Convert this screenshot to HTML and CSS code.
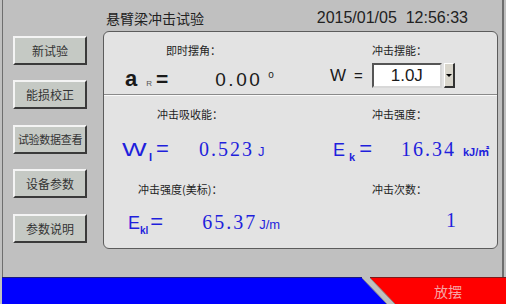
FILE: index.html
```html
<!DOCTYPE html>
<html lang="zh-CN">
<head>
    <meta charset="UTF-8">
    <title>悬臂梁冲击试验</title>
    <link rel="stylesheet" href="styles.css">
</head>
<body>
<div class="screen">
    <div class="main">
        <div class="header">
            <span class="title">悬臂梁冲击试验</span>
            <span class="clock">2015/01/05&nbsp;&nbsp;12:56:33</span>
        </div>

        <div class="sidebar">
            <button class="btn">新试验</button>
            <button class="btn">能损校正</button>
            <button class="btn btn-long">试验数据查看</button>
            <button class="btn">设备参数</button>
            <button class="btn">参数说明</button>
        </div>

        <div class="panel">
            <!-- 第一行：摆角 / 摆能 -->
            <div class="cell angle-cell">
                <div class="label">即时摆角：</div>
                <div class="value">
                    <span class="sym-a">a</span><span class="sub-r">R</span><span class="eq-black">=</span><span class="angle">0.00</span><span class="deg">o</span>
                </div>
            </div>
            <div class="cell energy-cell">
                <div class="label">冲击摆能：</div>
                <div class="value">
                    <span class="sym-w">W</span><span class="eq-small">=</span><span class="select"><span class="select-text">1.0J</span><span class="select-btn"></span></span>
                </div>
            </div>

            <div class="divider"></div>

            <!-- 第二行：吸收能 / 冲击强度 -->
            <div class="cell absorb-cell">
                <div class="label">冲击吸收能：</div>
                <div class="value blue">
                    <span class="big-w">W</span><span class="sub">I</span><span class="eq">=</span><span class="num num-absorb">0.523</span><span class="unit">J</span>
                </div>
            </div>
            <div class="cell strength-cell">
                <div class="label">冲击强度：</div>
                <div class="value blue">
                    <span class="big">E</span><span class="sub">k</span><span class="eq">=</span><span class="num num-strength">16.34</span><span class="unit unit-small">kJ/㎡</span>
                </div>
            </div>

            <!-- 第三行：美标强度 / 次数 -->
            <div class="cell us-cell">
                <div class="label">冲击强度(美标)：</div>
                <div class="value blue">
                    <span class="big">E</span><span class="sub">kl</span><span class="eq">=</span><span class="num num-us">65.37</span><span class="unit">J/m</span>
                </div>
            </div>
            <div class="cell count-cell">
                <div class="label">冲击次数：</div>
                <div class="value blue">
                    <span class="num num-count">1</span>
                </div>
            </div>
        </div>
    </div>

    <div class="footer">
        <svg class="footer-bar" width="506" height="27" viewBox="0 0 506 27">
            <rect x="0" y="0" width="506" height="27" fill="#c0c0c0"/>
            <polygon points="2,1 362,1 387,27 2,27" fill="#0000ff"/>
            <polygon points="370,1 506,1 506,27 395,27" fill="#ff0000"/>
            <line x1="2" y1="0.5" x2="362" y2="0.5" stroke="#1a1a80"/>
            <line x1="370" y1="0.5" x2="506" y2="0.5" stroke="#801a1a"/>
            <line x1="362" y1="1" x2="387" y2="27" stroke="#8a8a8a"/>
            <line x1="370" y1="1" x2="395" y2="27" stroke="#8a8a8a"/>
        </svg>
        <span class="status">放摆</span>
    </div>
</div>
</body>
</html>
```

FILE: styles.css
```css
body {
    margin: 0;
    width: 506px;
    height: 304px;
    overflow: hidden;
    background-color: #c0c0c0;
    font-family: "Liberation Sans", "Noto Sans CJK SC", sans-serif;
    color: #1a1a1a;
}
.screen {
    display: flex;
    flex-direction: column;
    height: 304px;
}
.main {
    flex: 0 0 277px;
    margin: 0 2px;
    border-left: 1px solid #6e6e6e;
    border-right: 2px solid #6e6e6e;
    display: grid;
    grid-template-columns: 100px 395px;
    grid-template-rows: 31px 218px;
}
.header {
    grid-column: 1 / 3;
    display: flex;
    align-items: center;
    padding: 5px 30px 0 103px;
}
.title {
    font-family: "Noto Sans CJK SC", sans-serif;
    font-size: 14px;
    color: #222;
}
.clock {
    margin-left: auto;
    font-size: 16px;
    color: #222;
}
.sidebar {
    display: flex;
    flex-direction: column;
    gap: 15.4px;
    padding: 5px 0 0 10px;
}
.btn {
    width: 74px;
    height: 29px;
    padding: 0;
    background-color: #c5c9c4;
    border-style: solid;
    border-width: 2px;
    border-color: #f4f4f4 #3a3a3a #3a3a3a #f4f4f4;
    font-family: "Noto Sans CJK SC", sans-serif;
    font-size: 12px;
    color: #333;
    white-space: nowrap;
}
.btn-long {
    font-size: 11px;
    letter-spacing: -0.3px;
}
.panel {
    display: grid;
    grid-template-columns: 214px 1fr;
    grid-template-rows: 62px 2px 72px 1fr;
    background-color: #e3e3e3;
    border: 1px solid #5c5c5c;
    border-radius: 6px;
}
.divider {
    grid-column: 1 / 3;
    background-color: #8a8a8a;
    border-bottom: 1px solid #fafafa;
}
.label {
    font-family: "Noto Sans CJK SC", sans-serif;
    font-size: 11px;
    line-height: 13px;
    color: #1e1e1e;
}
.value {
    white-space: nowrap;
}
.blue {
    color: #1f1fdc;
}

/* 第一行 */
.angle-cell .label { padding: 12px 0 0 62px; }
.angle-cell .value {
    padding: 6px 0 0 21px;
    line-height: 24px;
}
.sym-a {
    font-size: 22px;
    font-weight: bold;
}
.sub-r {
    margin-left: 9px;
    font-size: 8px;
    color: #555;
}
.eq-black {
    margin-left: 4px;
    font-size: 21px;
    font-weight: bold;
}
.angle {
    margin-left: 47px;
    font-size: 19px;
    letter-spacing: 2.5px;
}
.deg {
    margin-left: 6px;
    font-size: 10px;
    vertical-align: 8px;
}
.energy-cell .label { padding: 12px 0 0 54px; }
.energy-cell .value {
    display: flex;
    align-items: center;
    padding: 6px 0 0 12px;
}
.sym-w {
    font-size: 17px;
}
.eq-small {
    margin-left: 8px;
    font-size: 15px;
}
.select {
    display: flex;
    margin-left: 9px;
    height: 25px;
}
.select-text {
    width: 66px;
    background-color: #fff;
    border-style: solid;
    border-width: 2px;
    border-color: #555 #d8d8d8 #d8d8d8 #555;
    font-size: 17px;
    line-height: 21px;
    text-align: center;
}
.select-btn {
    width: 8px;
    margin-left: 2px;
    background-color: #d9d6cc;
    border-style: solid;
    border-width: 1px 2px 2px 1px;
    border-color: #fff #333 #333 #fff;
    display: flex;
    align-items: center;
    justify-content: center;
}
.select-btn::after {
    content: "";
    border-left: 3px solid transparent;
    border-right: 3px solid transparent;
    border-top: 3px solid #000;
}

/* 测量值 */
.big-w {
    display: inline-block;
    font-size: 18px;
    transform: scaleX(1.45);
    transform-origin: left;
}
.big {
    font-size: 18px;
}
.sub {
    font-size: 11px;
    font-weight: bold;
    vertical-align: -5px;
}
.eq {
    font-size: 22px;
}
.num {
    font-family: "Liberation Serif", serif;
    font-size: 20px;
    letter-spacing: 2px;
}
.unit {
    font-size: 13px;
}
.unit-small {
    font-size: 11px;
    font-weight: bold;
}
.absorb-cell .label { padding: 12px 0 0 53px; }
.absorb-cell .value { padding: 15px 0 0 18px; }
.absorb-cell .sub { margin-left: 10px; }
.absorb-cell .eq { margin-left: 4px; }
.num-absorb { margin-left: 30px; }
.absorb-cell .unit { margin-left: 4px; }

.strength-cell .label { padding: 12px 0 0 54px; }
.strength-cell .value { padding: 15px 0 0 15px; }
.strength-cell .sub { margin-left: 4px; }
.strength-cell .eq { margin-left: 4px; }
.num-strength { margin-left: 29px; }
.strength-cell .unit { margin-left: 7px; }

.us-cell .label { padding: 15px 0 0 34px; }
.us-cell .value { padding: 13px 0 0 24px; }
.us-cell .sub { font-size: 10px; }
.us-cell .eq { margin-left: 2px; }
.num-us { margin-left: 39px; }
.us-cell .unit { margin-left: 2px; }

.count-cell .label { padding: 15px 0 0 54px; }
.count-cell .value { padding: 13px 0 0 128px; }

.footer {
    flex: 1;
    display: grid;
    align-items: center;
}
.footer-bar,
.status {
    grid-area: 1 / 1;
}
.footer-bar {
    display: block;
}
.status {
    justify-self: end;
    margin-right: 44px;
    font-family: "Noto Sans CJK SC", sans-serif;
    font-size: 14px;
    color: #f7a4a4;
}
```
